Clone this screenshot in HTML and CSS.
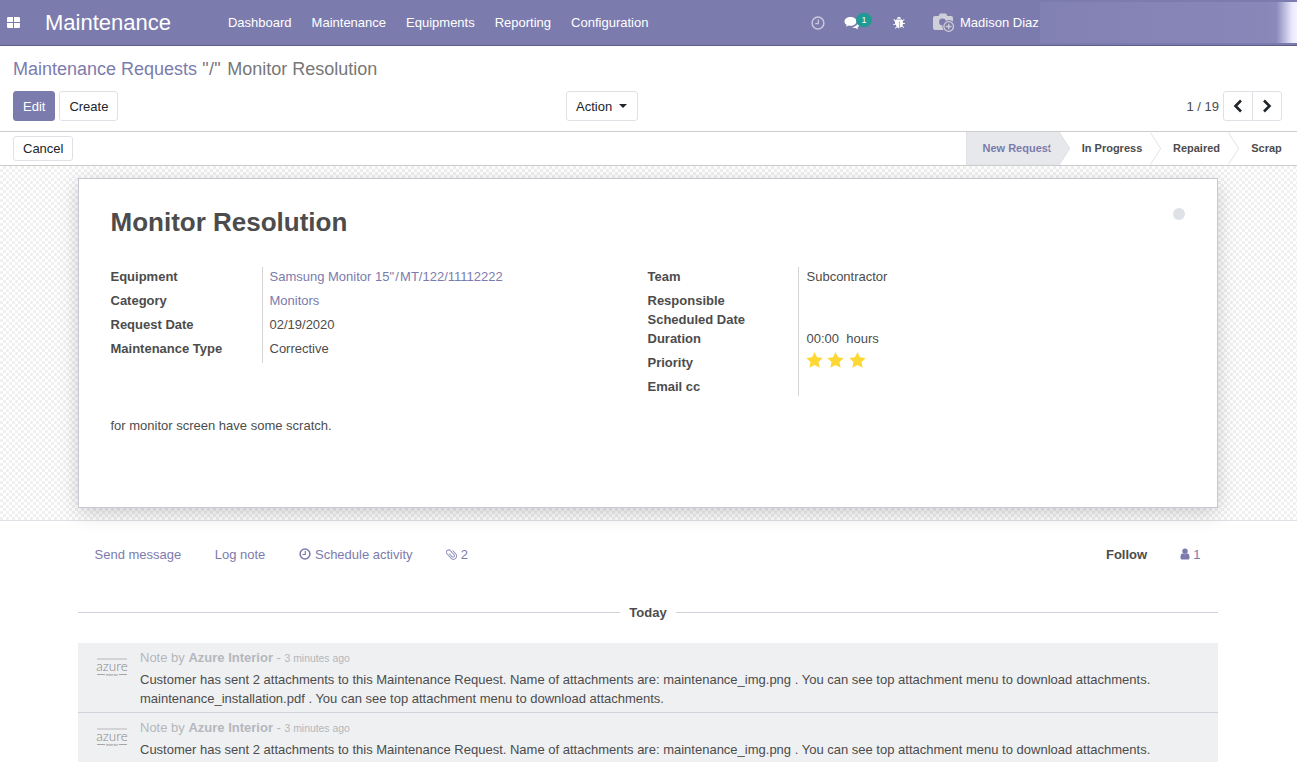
FILE: index.html
```html
<!DOCTYPE html>
<html lang="en">
<head>
    <meta charset="UTF-8">
    <meta name="viewport" content="width=device-width, initial-scale=1.0">
    <title>Monitor Resolution</title>
    <link rel="stylesheet" href="styles.css">
</head>
<body>
    <header class="navbar">
        <svg class="apps-icon" width="13" height="11" viewBox="0 0 13 11"><path fill="#fff" d="M0 1.2Q0 0 1.2 0H6v5H0zM7 0h4.800Q13 0 13 1.200V5H7zM0 6h6v5H1.200Q0 11 0 9.800zM7 6h6v3.800Q13 11 11.800 11H7z"/></svg>
        <span class="brand">Maintenance</span>
        <nav class="menu">
            <a>Dashboard</a>
            <a>Maintenance</a>
            <a>Equipments</a>
            <a>Reporting</a>
            <a>Configuration</a>
        </nav>
        <div class="systray">
            <svg class="tray-clock" width="14" height="14" viewBox="0 0 14 14"><circle cx="7" cy="7" r="5.900" fill="none" stroke="#c9c8de" stroke-width="1.500"/><path d="M7.300 3.500V7.600H4.200" fill="none" stroke="#c9c8de" stroke-width="1.300"/></svg>
            <span class="tray-chat">
                <svg width="16" height="14" viewBox="0 0 16 14"><path fill="#fff" d="M6.500 1C3 1 .5 3 .5 5.400c0 1.400.8 2.600 2.200 3.400L2 10.800l2.500-1.300c.6.100 1.300.2 2 .2 3.500 0 6-2 6-4.300S10 1 6.500 1z"/><path fill="#fff" d="M13.700 6.500c0 2.800-2.800 4.400-5.600 4.500 1 .8 2.200 1 3.400 1l2.500 1.500-.6-2c1.300-.7 2.100-1.600 2.100-2.900 0-1-.7-1.700-1.800-2.100z"/></svg>
                <span class="badge">1</span>
            </span>
            <svg class="tray-bug" width="12" height="13" viewBox="0 0 12 13"><path fill="#fff" d="M4 2.800C4 1.600 4.900 1 6 1s2 .6 2 1.800zM3 3.500h6l.5.700L11 2.900l.6.600-1.700 1.600v2h2v.9h-2c0 .7-.1 1.200-.4 1.700l1.700 1.700-.7.600-1.500-1.500c-.7.700-1.400 1.100-2.200 1.200V5.500h-.6v7c-.8-.1-1.500-.5-2.200-1.200l-1.500 1.500-.7-.6 1.700-1.700c-.3-.5-.4-1-.4-1.700H0v-.9h2v-2L.4 3.500l.6-.6 1.500 1.300z"/></svg>
            <span class="user">
                <svg width="22" height="19" viewBox="0 0 22 19"><path fill="#cfcfd9" d="M2 3h3.500L7 .5h6L14.500 3H18q2 0 2 2v3.500a6.500 6.500 0 0 0-9.500 8.500H2q-2 0-2-2V5q0-2 2-2z"/><circle cx="9.500" cy="9" r="3.400" fill="#7c7bad"/><circle cx="15.700" cy="13.500" r="4.800" fill="none" stroke="#cfcfd9" stroke-width="1.300"/><path d="M15.700 10.700v5.600M12.900 13.500h5.600" stroke="#cfcfd9" stroke-width="1.300"/></svg>
                <span>Madison Diaz</span>
            </span>
        </div>
        <div class="blurred"></div>
    </header>

    <section class="control-panel">
        <h1 class="breadcrumb"><a>Maintenance Requests</a> <span class="crumb-sep">"/"</span> <span>Monitor Resolution</span></h1>
        <div class="cp-row">
            <div class="cp-left">
                <button class="btn btn-primary">Edit</button>
                <button class="btn">Create</button>
            </div>
            <button class="btn btn-action">Action <i class="caret"></i></button>
            <div class="pager">
                <span>1 / 19</span>
                <div class="pager-btns">
                    <button class="btn"><svg width="10" height="14" viewBox="0 0 10 14"><path d="M8 1.500 2.500 7 8 12.500" fill="none" stroke="#212529" stroke-width="2.600"/></svg></button>
                    <button class="btn"><svg width="10" height="14" viewBox="0 0 10 14"><path d="M2 1.500 7.500 7 2 12.500" fill="none" stroke="#212529" stroke-width="2.600"/></svg></button>
                </div>
            </div>
        </div>
    </section>

    <section class="statusbar-row">
        <button class="btn">Cancel</button>
        <div class="statusbar">
            <span class="stage stage-active">New Request</span>
            <span class="stage stage-progress">In Progress</span>
            <span class="stage stage-repaired">Repaired</span>
            <span class="stage stage-scrap">Scrap</span>
        </div>
    </section>

    <main class="sheet-bg">
        <div class="sheet">
            <span class="kanban-dot"></span>
            <h2 class="title">Monitor Resolution</h2>
            <div class="groups">
                <div class="group group-left">
                    <div class="labels">
                        <div class="row">Equipment</div>
                        <div class="row">Category</div>
                        <div class="row">Request Date</div>
                        <div class="row">Maintenance Type</div>
                    </div>
                    <div class="values">
                        <div class="row"><a>Samsung Monitor 15<span class="wide-quote">"/</span>MT/122/11112222</a></div>
                        <div class="row"><a>Monitors</a></div>
                        <div class="row">02/19/2020</div>
                        <div class="row">Corrective</div>
                    </div>
                </div>
                <div class="group group-right">
                    <div class="labels">
                        <div class="row">Team</div>
                        <div class="row row-short">Responsible</div>
                        <div class="row row-short">Scheduled Date</div>
                        <div class="row">Duration</div>
                        <div class="row">Priority</div>
                        <div class="row row-short">Email cc</div>
                    </div>
                    <div class="values">
                        <div class="row">Subcontractor</div>
                        <div class="row row-short"></div>
                        <div class="row row-short"></div>
                        <div class="row">00:00 &nbsp;hours</div>
                        <div class="row stars">
                            <svg width="17" height="16" viewBox="0 0 17 16"><path id="star" fill="#fdd835" d="M8.500 0l2.500 5.300 5.800.7-4.300 4 1.100 5.800-5.100-2.900-5.100 2.900L4.500 10 .2 6 6 5.300z"/></svg>
                            <svg width="17" height="16" viewBox="0 0 17 16"><use href="#star"/></svg>
                            <svg width="17" height="16" viewBox="0 0 17 16"><use href="#star"/></svg>
                        </div>
                        <div class="row row-short"></div>
                    </div>
                </div>
            </div>
            <p class="description">for monitor screen have some scratch.</p>
        </div>
    </main>

    <section class="chatter">
        <div class="chatter-top">
            <a>Send message</a>
            <a class="log-note">Log note</a>
            <a><svg width="12" height="12" viewBox="0 0 12 12"><circle cx="6" cy="6" r="4.900" fill="none" stroke="#7c7bad" stroke-width="1.500"/><path d="M6.300 3v3.500H3.500" fill="none" stroke="#7c7bad" stroke-width="1.200"/></svg> Schedule activity</a>
            <a><svg width="11" height="12" viewBox="0 0 12 12"><path transform="rotate(-42 6 6)" d="M4.500 4V8.500a1.500 1.500 0 0 0 3 0V2.500a2.500 2.500 0 0 0-5 0V9a3.500 3.500 0 0 0 7 0V4" fill="none" stroke="#9493c0" stroke-width="1.100"/></svg> 2</a>
            <b class="follow">Follow</b>
            <a class="followers"><svg width="10" height="12" viewBox="0 0 11 12"><path fill="#7c7bad" d="M5.500 0a3 3 0 0 1 0 6 3 3 0 0 1 0-6zM2.800 5.500c1.500 1.200 4 1.200 5.400 0 1.500 0 2.300 1.500 2.300 4.500 0 1.300-.8 2-2 2H2.500c-1.200 0-2-.7-2-2 0-3 .8-4.500 2.300-4.500z"/></svg> 1</a>
        </div>
        <div class="separator"><span>Today</span></div>
        <article class="message">
            <div class="avatar"><span class="logo-name">azure</span><span class="logo-sub">interior</span></div>
            <div class="msg-body">
                <div class="msg-head">Note by <b>Azure Interior</b> - <small>3 minutes ago</small></div>
                <p>Customer has sent 2 attachments to this Maintenance Request. Name of attachments are: maintenance_img.png . You can see top attachment menu to download attachments. maintenance_installation.pdf . You can see top attachment menu to download attachments.</p>
            </div>
        </article>
        <article class="message">
            <div class="avatar"><span class="logo-name">azure</span><span class="logo-sub">interior</span></div>
            <div class="msg-body">
                <div class="msg-head">Note by <b>Azure Interior</b> - <small>3 minutes ago</small></div>
                <p>Customer has sent 2 attachments to this Maintenance Request. Name of attachments are: maintenance_img.png . You can see top attachment menu to download attachments.</p>
            </div>
        </article>
    </section>
</body>
</html>
```

FILE: styles.css
```css
html, body {
    height: 100%;
    overflow: hidden;
}

body {
    margin: 0;
    font-family: "Liberation Sans", Arial, sans-serif;
    font-size: 13px;
    line-height: 19px;
    color: #4c4c4c;
    background-color: #fff;
}

a {
    color: #7c7bad;
}

p, h1, h2 {
    margin: 0;
}

/* navbar */
.navbar {
    position: relative;
    display: flex;
    align-items: center;
    height: 45px;
    border-bottom: 1px solid #5f5e8b;
    background-color: #7c7bad;
    color: #fff;
    overflow: hidden;
}

.apps-icon {
    margin-left: 7px;
}

.brand {
    margin-left: 25px;
    font-size: 22px;
}

.menu {
    display: flex;
    gap: 20px;
    margin-left: 57px;
}

.menu a {
    color: #fff;
}

.systray {
    position: absolute;
    top: 0;
    left: 811px;
    display: flex;
    align-items: center;
    height: 45px;
}

.tray-chat {
    position: relative;
    display: flex;
    margin-left: 19px;
}

.badge {
    position: absolute;
    top: -3px;
    left: 12px;
    width: 16px;
    height: 14px;
    border-radius: 8px;
    background-color: #1f9a94;
    font-size: 9px;
    line-height: 14px;
    text-align: center;
}

.tray-bug {
    margin-left: 33px;
}

.user {
    display: flex;
    align-items: center;
    gap: 5px;
    margin-left: 28px;
}

.blurred {
    position: absolute;
    top: 2px;
    right: 0;
    bottom: 2px;
    width: 257px;
    background: linear-gradient(90deg, #8281b3 0, #8887b8 88%, #8b8abb 92%, #e8e8fb 98%, #f4f4ff 100%);
}

/* control panel */
.control-panel {
    height: 85px;
    padding: 0 13px;
    border-bottom: 1px solid #ccc;
}

.breadcrumb {
    padding-top: 13px;
    font-size: 18px;
    font-weight: 400;
    line-height: 21px;
    color: #777;
}

.crumb-sep {
    margin-right: 1px;
    letter-spacing: .4px;
}

.cp-row {
    position: relative;
    display: flex;
    align-items: flex-start;
    justify-content: space-between;
    margin-top: 11px;
}

.btn {
    height: 30px;
    padding: 0 9px;
    border: 1px solid #dee2e6;
    border-radius: 3px;
    background-color: #fff;
    color: #212529;
    font-family: inherit;
    font-size: 13px;
}

.btn-primary {
    border-color: #7c7bad;
    background-color: #7c7bad;
    color: #fff;
}

.cp-left {
    display: flex;
    gap: 4px;
}

.btn-action {
    position: absolute;
    left: 553px;
    top: 0;
    width: 72px;
    padding: 0 0 0 9px;
    text-align: left;
}

.caret {
    display: inline-block;
    margin-left: 3px;
    border-top: 4px solid #212529;
    border-left: 4px solid transparent;
    border-right: 4px solid transparent;
    vertical-align: 3px;
}

.pager {
    display: flex;
    align-items: center;
    gap: 4px;
    height: 30px;
    margin-right: 2px;
}

.pager-btns {
    display: flex;
}

.pager-btns .btn {
    display: flex;
    align-items: center;
    justify-content: center;
    width: 30px;
    padding: 0;
}

.pager-btns .btn:first-child {
    border-radius: 3px 0 0 3px;
}

.pager-btns .btn:last-child {
    margin-left: -1px;
    border-radius: 0 3px 3px 0;
}

/* status bar */
.statusbar-row {
    display: flex;
    align-items: center;
    justify-content: space-between;
    height: 33px;
    padding-left: 13px;
    border-bottom: 1px solid #ccc;
}

.statusbar-row > .btn {
    height: 25px;
}

.statusbar {
    display: flex;
    height: 33px;
}

.stage {
    position: relative;
    display: flex;
    align-items: center;
    justify-content: center;
    box-sizing: border-box;
    padding-left: 13px;
    font-size: 11px;
    font-weight: 700;
    color: #4c4c4c;
}

.stage::after {
    content: "";
    position: absolute;
    top: 4.850px;
    right: -11.650px;
    width: 23.300px;
    height: 23.300px;
    box-sizing: border-box;
    border-top: 1px solid #dee2e6;
    border-right: 1px solid #dee2e6;
    transform: scaleX(.648) rotate(45deg);
    z-index: 1;
}

.stage-active {
    width: 94px;
    padding-left: 7px;
    background-color: #e6e8eb;
    color: #7c7bad;
    border-left: 1px solid #dee2e6;
}

.stage-active::after {
    background-color: #e6e8eb;
}

.stage-progress {
    width: 91px;
}

.stage-repaired {
    width: 78px;
}

.stage-scrap {
    width: 68px;
    padding-left: 7px;
}

.stage-scrap::after {
    display: none;
}

/* form sheet */
.sheet-bg {
    height: 355px;
    padding-top: 12px;
    box-sizing: border-box;
    border-bottom: 1px solid #dee2e6;
    background-color: #fff;
    background-image: conic-gradient(#f0f0f0 25%, #fff 0 50%, #f0f0f0 0 75%, #fff 0);
    background-size: 6px 6px;
}

.sheet {
    position: relative;
    width: 1140px;
    height: 330px;
    margin-left: 78px;
    box-sizing: border-box;
    padding: 25px 32px 0 31.500px;
    border: 1px solid #c8c8d3;
    background-color: #fff;
    box-shadow: 0 5px 20px -1px rgba(0, 0, 0, 0.2);
}

.kanban-dot {
    position: absolute;
    top: 29px;
    right: 32px;
    width: 12px;
    height: 12px;
    border-radius: 50%;
    background-color: #dee2e6;
}

.title {
    font-size: 26px;
    line-height: 36px;
    color: #4c4c4c;
}

.groups {
    display: flex;
    margin-top: 27px;
}

.group {
    display: flex;
    align-items: stretch;
}

.group-left {
    width: 537px;
    align-self: flex-start;
}

.labels {
    width: 151.500px;
    font-weight: 700;
}

.group-right .labels {
    width: 150.500px;
}

.values {
    padding-left: 6.500px;
    border-left: 1px solid #d6d6d6;
}

.group-right .values {
    padding-left: 7.500px;
}

.wide-quote {
    letter-spacing: 1.200px;
}

.row {
    height: 24px;
}

.row-short {
    height: 19px;
}

.stars {
    display: flex;
    gap: 4.500px;
    margin: -1px 0 1px -1px;
}

.description {
    margin-top: 20px;
}

/* chatter */
.chatter {
    width: 1140px;
    margin-left: 78px;
}

.chatter-top {
    display: flex;
    align-items: center;
    height: 66px;
    padding-left: 16.500px;
    padding-right: 17.500px;
    color: #7c7bad;
}

.chatter-top a {
    margin-right: 33.500px;
}

.chatter-top .log-note {
    margin-right: 34px;
}

.chatter-top svg {
    vertical-align: -1px;
}

.follow {
    margin-left: auto;
    margin-right: 32.500px;
    color: #4c4c4c;
}

.chatter-top .followers {
    margin-right: 0;
}

.separator {
    display: flex;
    align-items: center;
    gap: 9px;
    height: 19px;
    margin-top: 16px;
    margin-bottom: 21px;
    font-weight: 700;
}

.separator::before,
.separator::after {
    content: "";
    flex: 1;
    height: 1px;
    background-color: #ced4da;
}

.message {
    display: flex;
    height: 69px;
    border-bottom: 1px solid #ced4da;
    background-color: #eff0f2;
}

.avatar {
    display: flex;
    flex-direction: column;
    align-items: center;
    width: 30px;
    height: 16px;
    margin: 15px 13px 0 19px;
    padding-top: 1px;
    border-top: 2px solid #d4d4d6;
    color: #858585;
}

.logo-name {
    font-family: Lato, "Liberation Sans", sans-serif;
    font-size: 13.500px;
    font-weight: 300;
    line-height: 11px;
}

.logo-sub {
    display: flex;
    align-items: center;
    align-self: stretch;
    gap: 1px;
    font-size: 4px;
    line-height: 5px;
}

.logo-sub::before,
.logo-sub::after {
    content: "";
    flex: 1;
    height: 1px;
    background-color: #a5a5a8;
}

.msg-body {
    flex: 1;
    padding-top: 5px;
    padding-right: 60px;
}

.msg-head {
    color: #b4b7bc;
    line-height: 20px;
}

.msg-head small {
    font-size: 10.400px;
}

.msg-body p {
    margin-top: 1px;
    color: #4c4c4c;
}
```
